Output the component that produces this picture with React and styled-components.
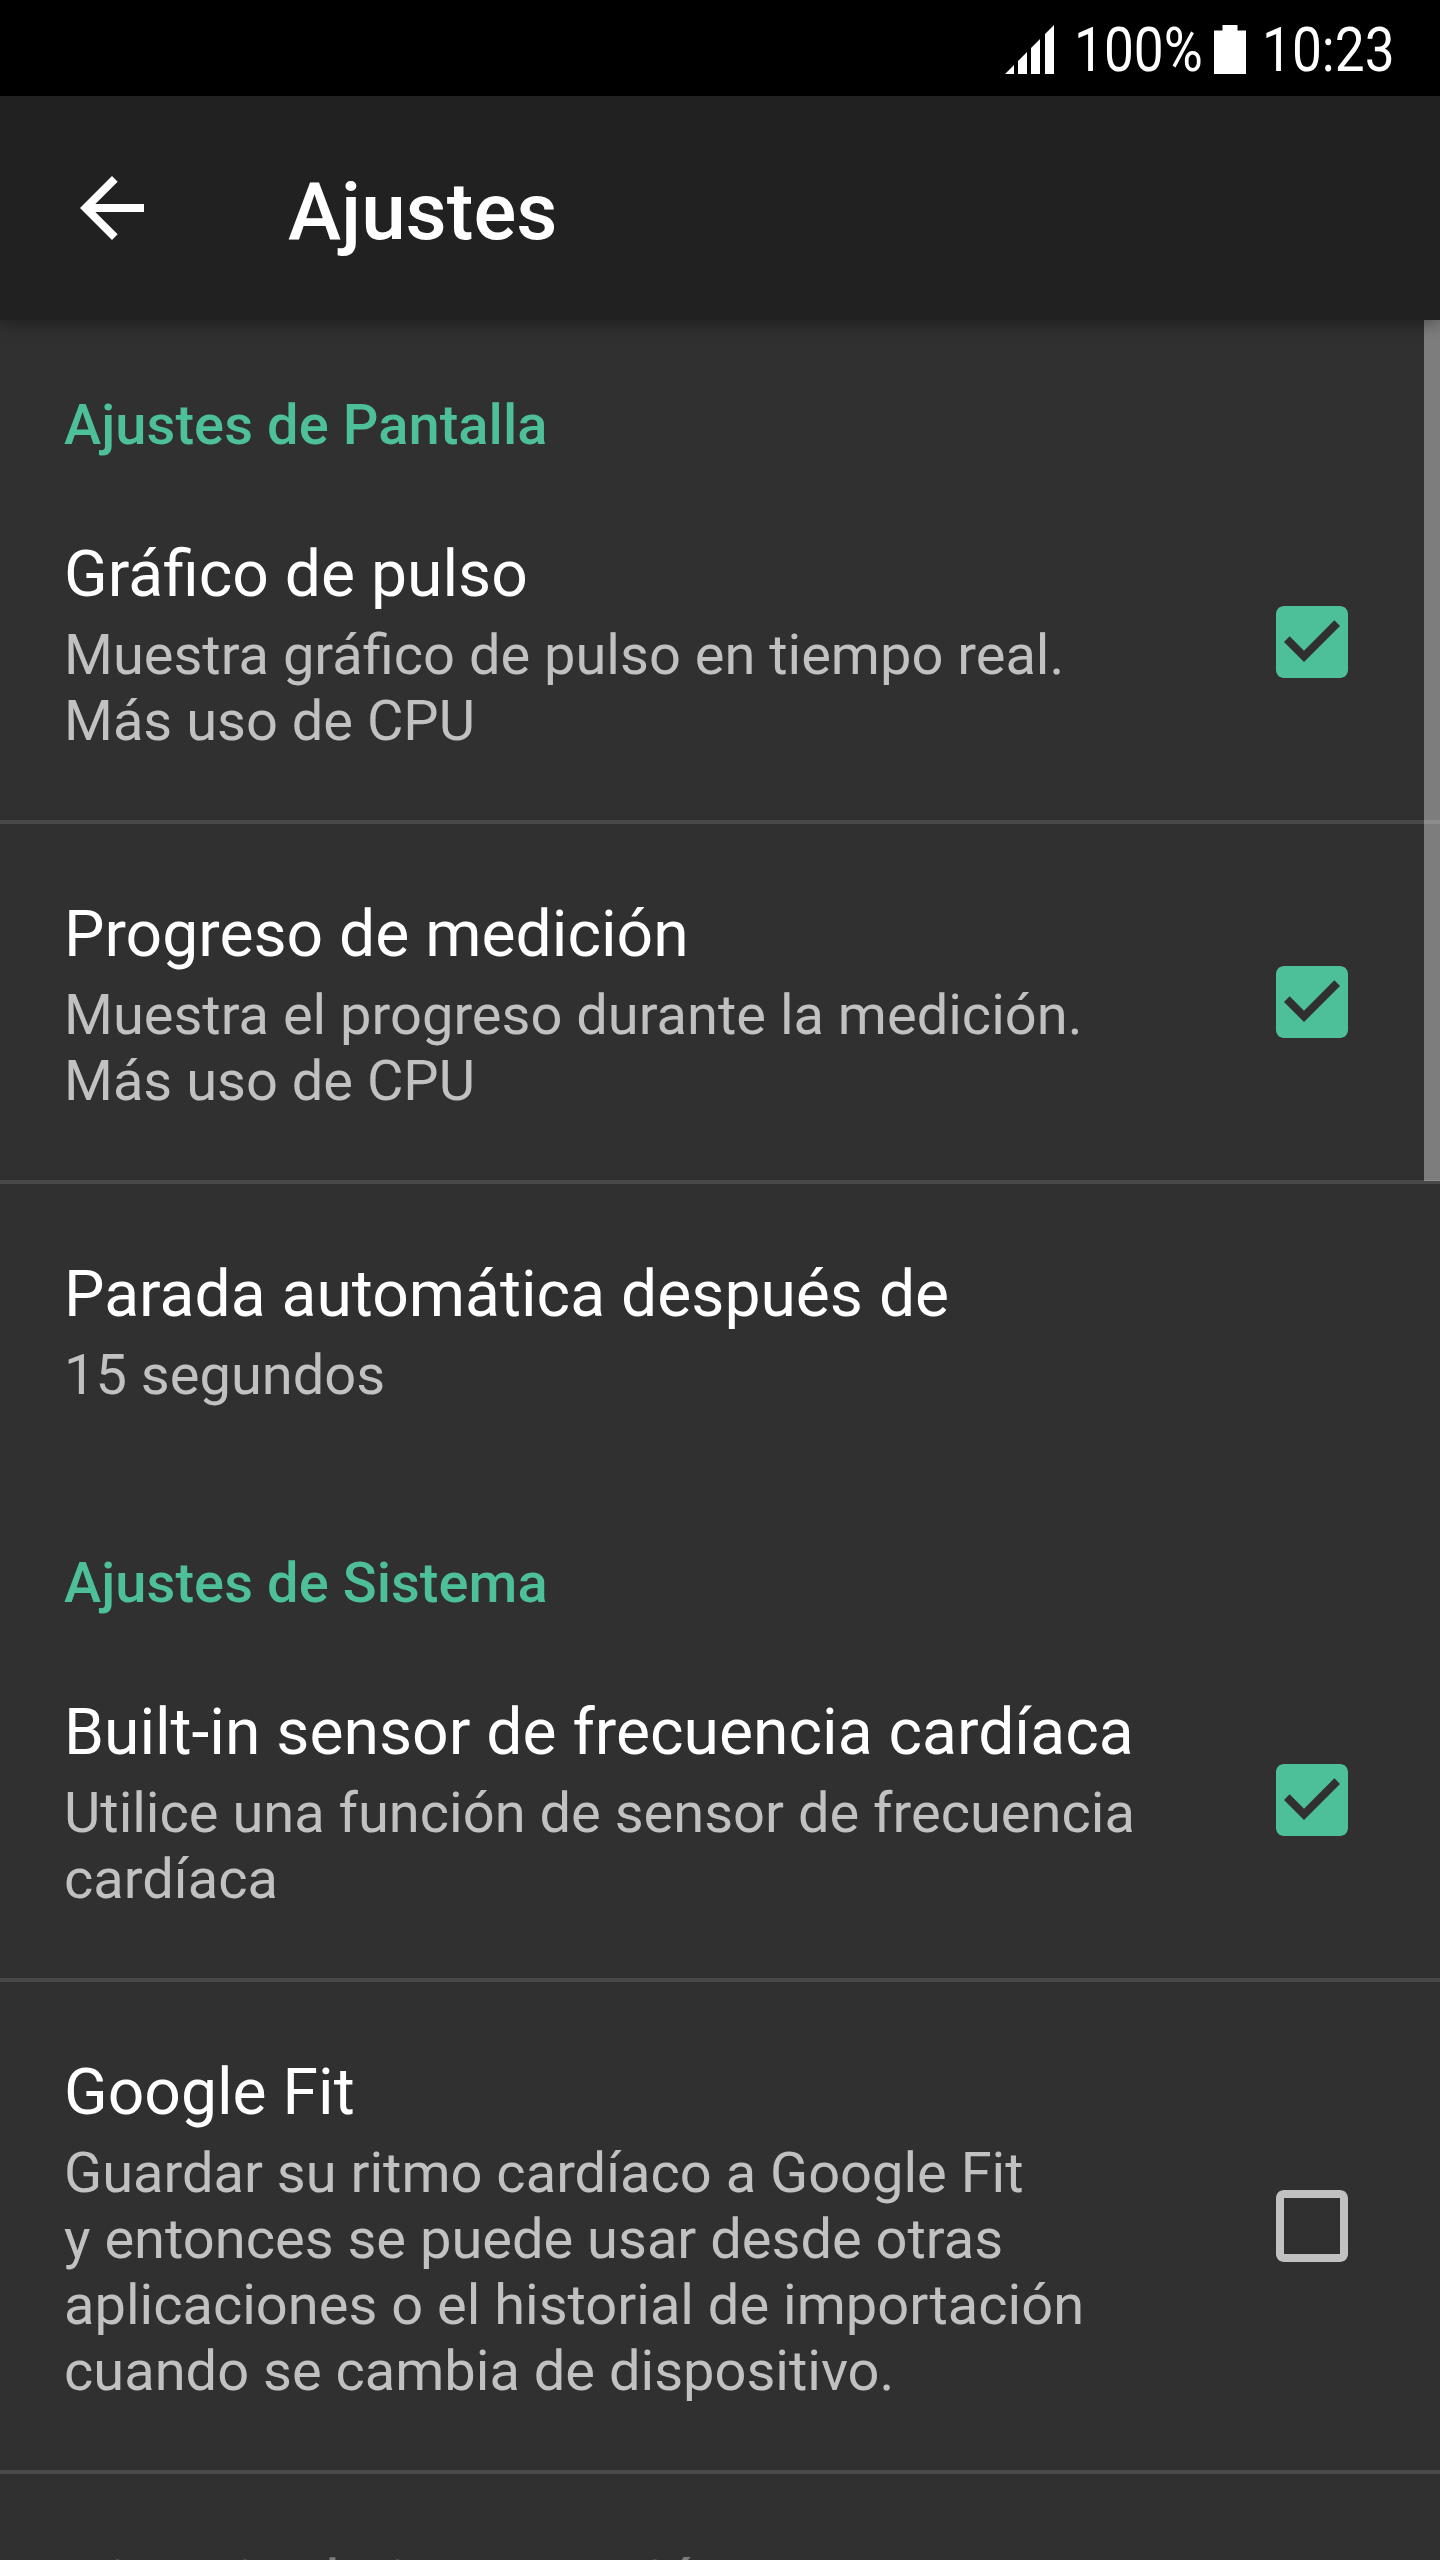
import { useState } from "react";
import styled, { createGlobalStyle } from "styled-components";

const GlobalStyle = createGlobalStyle`
  * {
    box-sizing: border-box;
  }
  body {
    margin: 0;
    background: #303030;
    font-family: Roboto, sans-serif;
  }
`;

const sections = [
  {
    title: "Ajustes de Pantalla",
    items: [
      {
        id: "graph",
        title: "Gráfico de pulso",
        summary: ["Muestra gráfico de pulso en tiempo real.", "Más uso de CPU"],
        checkbox: true,
      },
      {
        id: "progress",
        title: "Progreso de medición",
        summary: ["Muestra el progreso durante la medición.", "Más uso de CPU"],
        checkbox: true,
      },
      {
        id: "autostop",
        title: "Parada automática después de",
        summary: ["15 segundos"],
      },
    ],
  },
  {
    title: "Ajustes de Sistema",
    items: [
      {
        id: "sensor",
        title: "Built-in sensor de frecuencia cardíaca",
        summary: ["Utilice una función de sensor de frecuencia", "cardíaca"],
        checkbox: true,
      },
      {
        id: "fit",
        title: "Google Fit",
        summary: [
          "Guardar su ritmo cardíaco a Google Fit",
          "y entonces se puede usar desde otras",
          "aplicaciones o el historial de importación",
          "cuando se cambia de dispositivo.",
        ],
        checkbox: true,
      },
      {
        id: "import",
        title: "Historia de importación",
        summary: [],
        disabled: true,
      },
    ],
  },
];

const SignalIcon = () => (
  <svg width="49" height="49" viewBox="0 0 49 49" fill="#fff">
    <path d="M0 49L9 40V49ZM13 49V36L22 27V49ZM26 49V23L35 14V49ZM40 49V9L49 0V49Z" />
  </svg>
);

const BatteryIcon = () => (
  <svg width="32" height="49" viewBox="0 0 32 49" fill="#fff">
    <path d="M8.5 0H23.5V5.5H32V49H0V5.5H8.5Z" />
  </svg>
);

const BackIcon = () => (
  <svg width="96" height="96" viewBox="0 0 24 24" fill="#fff">
    <path d="M20 11H7.83l5.59-5.59L12 4l-8 8 8 8 1.41-1.41L7.83 13H20v-2z" />
  </svg>
);

const CheckIcon = ({ checked }) => (
  <svg width="96" height="96" viewBox="0 0 24 24">
    {checked ? (
      <path
        fill="#4dbf99"
        d="M19 3H5c-1.11 0-2 .9-2 2v14c0 1.1.89 2 2 2h14c1.11 0 2-.9 2-2V5c0-1.1-.89-2-2-2zm-9 14l-5-5 1.41-1.41L10 14.17l7.59-7.59L19 8l-9 9z"
      />
    ) : (
      <path
        fill="#c1c1c1"
        d="M19 5v14H5V5h14m0-2H5c-1.1 0-2 .9-2 2v14c0 1.1.9 2 2 2h14c1.1 0 2-.9 2-2V5c0-1.1-.9-2-2-2z"
      />
    )}
  </svg>
);

export default function App() {
  const [values, setValues] = useState({ graph: true, progress: true, sensor: true, fit: false });

  const toggle = (item) => {
    if (!item.checkbox) return;
    setValues({ ...values, [item.id]: !values[item.id] });
  };

  return (
    <Screen>
      <GlobalStyle />
      <StatusBar>
        <SignalIcon />
        <Battery>100%</Battery>
        <BatteryIcon />
        <Clock>10:23</Clock>
      </StatusBar>
      <Toolbar>
        <BackButton aria-label="Atrás">
          <BackIcon />
        </BackButton>
        <PageTitle>Ajustes</PageTitle>
      </Toolbar>
      <List>
        {sections.map((section) => (
          <Section key={section.title}>
            <SectionTitle>{section.title}</SectionTitle>
            {section.items.map((item) => (
              <Row key={item.id} onClick={() => toggle(item)}>
                <RowText>
                  <RowTitle $disabled={item.disabled}>{item.title}</RowTitle>
                  {item.summary.map((line) => (
                    <Summary key={line}>{line}</Summary>
                  ))}
                </RowText>
                {item.checkbox && <CheckIcon checked={values[item.id]} />}
              </Row>
            ))}
          </Section>
        ))}
        <Scrollbar />
      </List>
    </Screen>
  );
}

const Screen = styled.div`
  width: 1440px;
  height: 2560px;
  display: flex;
  flex-direction: column;
  overflow: hidden;
  background: #303030;
  color: #fff;
`;

const StatusBar = styled.div`
  height: 96px;
  flex: none;
  display: flex;
  align-items: center;
  padding: 2px 0 0 1005px;
  background: #000;

  svg {
    flex: none;
  }
`;

const StatusText = styled.span`
  padding-top: 4px;
  font-size: 60.5px;
  line-height: 70px;
  white-space: nowrap;
  transform: scaleX(0.88);
  transform-origin: left;
`;

const Battery = styled(StatusText)`
  width: 140px;
  margin-left: 20px;
`;

const Clock = styled(StatusText)`
  margin-left: 16px;
`;

const Toolbar = styled.header`
  height: 224px;
  flex: none;
  display: flex;
  align-items: center;
  padding-left: 64px;
  background: #212121;
  box-shadow: 0 4px 16px rgba(0, 0, 0, 0.35);
  z-index: 1;
`;

const BackButton = styled.button`
  width: 96px;
  height: 96px;
  padding: 0;
  border: none;
  background: none;
`;

const PageTitle = styled.h1`
  margin: 8px 0 0 128px;
  font-size: 80px;
  line-height: 94px;
  font-weight: 500;
`;

const List = styled.main`
  position: relative;
  flex: 1;
  min-height: 0;
`;

const Section = styled.section`
  & + & {
    padding-top: 4px;
  }
`;

const SectionTitle = styled.h2`
  height: 144px;
  margin: 0;
  padding: 72px 64px 0;
  font-size: 56px;
  line-height: 66px;
  font-weight: 500;
  letter-spacing: 0.06px;
  font-variant-ligatures: common-ligatures;
  color: #4dbf99;
`;

const Row = styled.div`
  display: flex;
  align-items: center;
  justify-content: space-between;
  padding: 0 80px 0 64px;

  & + & {
    border-top: 4px solid #494949;
  }
`;

const RowText = styled.div`
  padding: 73px 0 66px;
`;

const RowTitle = styled.div`
  height: 85px;
  font-size: 64.2px;
  line-height: 75px;
  white-space: nowrap;
  color: ${(props) => (props.$disabled ? "#7d7d7d" : "#fff")};
`;

const Summary = styled.div`
  font-size: 56px;
  line-height: 66px;
  white-space: nowrap;
  color: #c1c1c1;
`;

const Scrollbar = styled.div`
  position: absolute;
  top: 0;
  right: 0;
  width: 16px;
  height: 861px;
  background: rgba(255, 255, 255, 0.372);
`;
